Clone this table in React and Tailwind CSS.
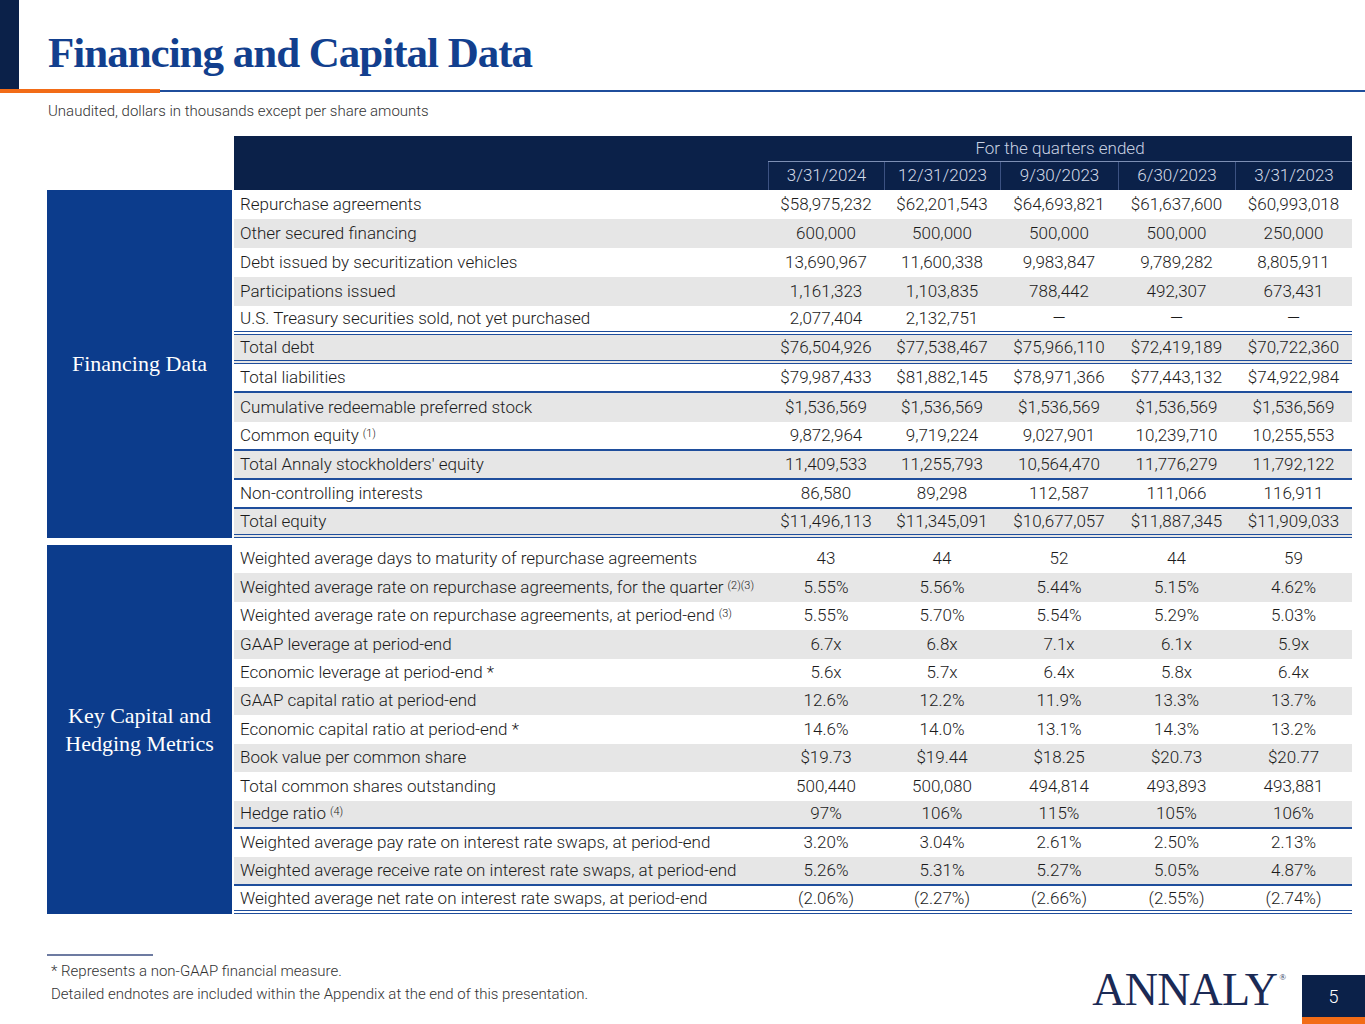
import React from "react";

const NAVY = "bg-[#0b2149]";

const financing = [
  { label: "Repurchase agreements", v: ["$58,975,232", "$62,201,543", "$64,693,821", "$61,637,600", "$60,993,018"] },
  { label: "Other secured financing", v: ["600,000", "500,000", "500,000", "500,000", "250,000"] },
  { label: "Debt issued by securitization vehicles", v: ["13,690,967", "11,600,338", "9,983,847", "9,789,282", "8,805,911"] },
  { label: "Participations issued", v: ["1,161,323", "1,103,835", "788,442", "492,307", "673,431"] },
  { label: "U.S. Treasury securities sold, not yet purchased", v: ["2,077,404", "2,132,751", "—", "—", "—"], line: "double" },
  { label: "Total debt", v: ["$76,504,926", "$77,538,467", "$75,966,110", "$72,419,189", "$70,722,360"], line: "double" },
  { label: "Total liabilities", v: ["$79,987,433", "$81,882,145", "$78,971,366", "$77,443,132", "$74,922,984"], line: "single" },
  { label: "Cumulative redeemable preferred stock", v: ["$1,536,569", "$1,536,569", "$1,536,569", "$1,536,569", "$1,536,569"] },
  { label: "Common equity", sup: "(1)", v: ["9,872,964", "9,719,224", "9,027,901", "10,239,710", "10,255,553"], line: "single" },
  { label: "Total Annaly stockholders' equity", v: ["11,409,533", "11,255,793", "10,564,470", "11,776,279", "11,792,122"], line: "single" },
  { label: "Non-controlling interests", v: ["86,580", "89,298", "112,587", "111,066", "116,911"], line: "single" },
  { label: "Total equity", v: ["$11,496,113", "$11,345,091", "$10,677,057", "$11,887,345", "$11,909,033"], line: "double" },
];

const capital = [
  { label: "Weighted average days to maturity of repurchase agreements", v: ["43", "44", "52", "44", "59"] },
  { label: "Weighted average rate on repurchase agreements, for the quarter", sup: "(2)(3)", v: ["5.55%", "5.56%", "5.44%", "5.15%", "4.62%"] },
  { label: "Weighted average rate on repurchase agreements, at period-end", sup: "(3)", v: ["5.55%", "5.70%", "5.54%", "5.29%", "5.03%"] },
  { label: "GAAP leverage at period-end", v: ["6.7x", "6.8x", "7.1x", "6.1x", "5.9x"] },
  { label: "Economic leverage at period-end *", v: ["5.6x", "5.7x", "6.4x", "5.8x", "6.4x"] },
  { label: "GAAP capital ratio at period-end", v: ["12.6%", "12.2%", "11.9%", "13.3%", "13.7%"] },
  { label: "Economic capital ratio at period-end *", v: ["14.6%", "14.0%", "13.1%", "14.3%", "13.2%"] },
  { label: "Book value per common share", v: ["$19.73", "$19.44", "$18.25", "$20.73", "$20.77"] },
  { label: "Total common shares outstanding", v: ["500,440", "500,080", "494,814", "493,893", "493,881"] },
  { label: "Hedge ratio", sup: "(4)", v: ["97%", "106%", "115%", "105%", "106%"], line: "single" },
  { label: "Weighted average pay rate on interest rate swaps, at period-end", v: ["3.20%", "3.04%", "2.61%", "2.50%", "2.13%"] },
  { label: "Weighted average receive rate on interest rate swaps, at period-end", v: ["5.26%", "5.31%", "5.27%", "5.05%", "4.87%"], line: "single" },
  { label: "Weighted average net rate on interest rate swaps, at period-end", v: ["(2.06%)", "(2.27%)", "(2.66%)", "(2.55%)", "(2.74%)"], line: "double" },
];

const dates = ["3/31/2024", "12/31/2023", "9/30/2023", "6/30/2023", "3/31/2023"];

function Row({ row, index, height }) {
  const bg = index % 2 === 1 ? "bg-[#e6e6e6]" : "bg-white";
  let line = "";
  if (row.line === "single") line = "border-b-2 border-[#1f4e9c]";
  if (row.line === "double") line = "border-b-4 border-double border-[#1f4e9c]";
  return (
    <div className={`grid grid-cols-[534px_116px_116px_118px_117px_117px] items-center ${height} ${bg} ${line}`}>
      <div className="pl-[6px] whitespace-nowrap">
        {row.label}
        {row.sup && <sup className="text-[11px] ml-[4px] relative top-[-4px]">{row.sup}</sup>}
      </div>
      {row.v.map((val, i) => (
        <div key={i} className="text-center">
          {val}
        </div>
      ))}
    </div>
  );
}

function Section({ title, rows, height }) {
  return (
    <div className="flex gap-[2px] items-stretch">
      <div className="w-[185px] bg-[#0c3c8c] flex items-center justify-center text-center text-white text-[22px] leading-[28px] font-normal font-['Liberation_Serif',serif]">
        {title}
      </div>
      <div className="w-[1118px]">
        {rows.map((r, i) => (
          <Row key={r.label} row={r} index={i} height={height} />
        ))}
      </div>
    </div>
  );
}

export default function App() {
  return (
    <div className="w-[1365px] h-[1024px] bg-white flex flex-col overflow-hidden font-['Roboto','Liberation_Sans',sans-serif] font-light text-[#1b1b1b]">
      {/* title */}
      <div className="flex items-end h-[89px]">
        <div className={`w-[19px] h-[89px] ${NAVY}`} />
        <h1 className="ml-[29px] mb-[15px] text-[#123f8e] text-[43px] leading-none font-bold tracking-[-1px] font-['Liberation_Serif',serif]">
          Financing and Capital Data
        </h1>
      </div>
      <div className="flex items-start">
        <div className="w-[160px] h-[4px] bg-[#f26c17]" />
        <div className="flex-1 h-[2px] mt-[1px] bg-[#1f4e9c]" />
      </div>
      <p className="ml-[48px] mt-[9px] text-[15px] leading-[19px] text-[#333]">
        Unaudited, dollars in thousands except per share amounts
      </p>

      {/* table */}
      <div className="ml-[47px] mt-[15px] text-[17px]">
        <div className={`ml-[187px] w-[1118px] ${NAVY} grid grid-cols-[534px_116px_116px_118px_117px_117px]`}>
          <div className="row-span-2" />
          <div className="col-span-5 h-[26px] flex items-center justify-center text-[#c9d2e3] border-b border-[#7d8fb4]">
            For the quarters ended
          </div>
          {dates.map((d) => (
            <div key={d} className="h-[28px] flex items-center justify-center text-[#d3dae8] border-l border-[#3c5282]">
              {d}
            </div>
          ))}
        </div>
        <Section title="Financing Data" rows={financing} height="h-[29px]" />
        <div className="mt-[7px]">
          <Section
            title={
              <span>
                Key Capital and
                <br />
                Hedging Metrics
              </span>
            }
            rows={capital}
            height="h-[28.4px]"
          />
        </div>
      </div>

      {/* footer */}
      <div className="mt-auto flex items-end justify-between">
        <div className="ml-[47px] pb-[18px]">
          <div className="w-[106px] h-[2px] bg-[#6d7ba1] mb-[4px]" />
          <p className="ml-[4px] text-[15px] leading-[23px] text-[#333]">* Represents a non-GAAP financial measure.</p>
          <p className="ml-[4px] text-[15px] leading-[23px] text-[#333]">
            Detailed endnotes are included within the Appendix at the end of this presentation.
          </p>
        </div>
        <div className="flex items-end">
          <div className="mb-[11px] mr-[16px] flex items-start text-[#1b2a55] font-['Liberation_Serif',serif] font-normal">
            <span className="text-[46px] leading-none tracking-[-0.8px]">ANNALY</span>
            <span className="text-[9px] ml-[2px] mt-[4px]">®</span>
          </div>
          <div className="w-[63px] flex flex-col">
            <div className={`h-[42px] ${NAVY} flex items-center justify-center text-white text-[18px]`}>5</div>
            <div className="h-[7px] bg-[#f26c17]" />
          </div>
        </div>
      </div>
    </div>
  );
}
